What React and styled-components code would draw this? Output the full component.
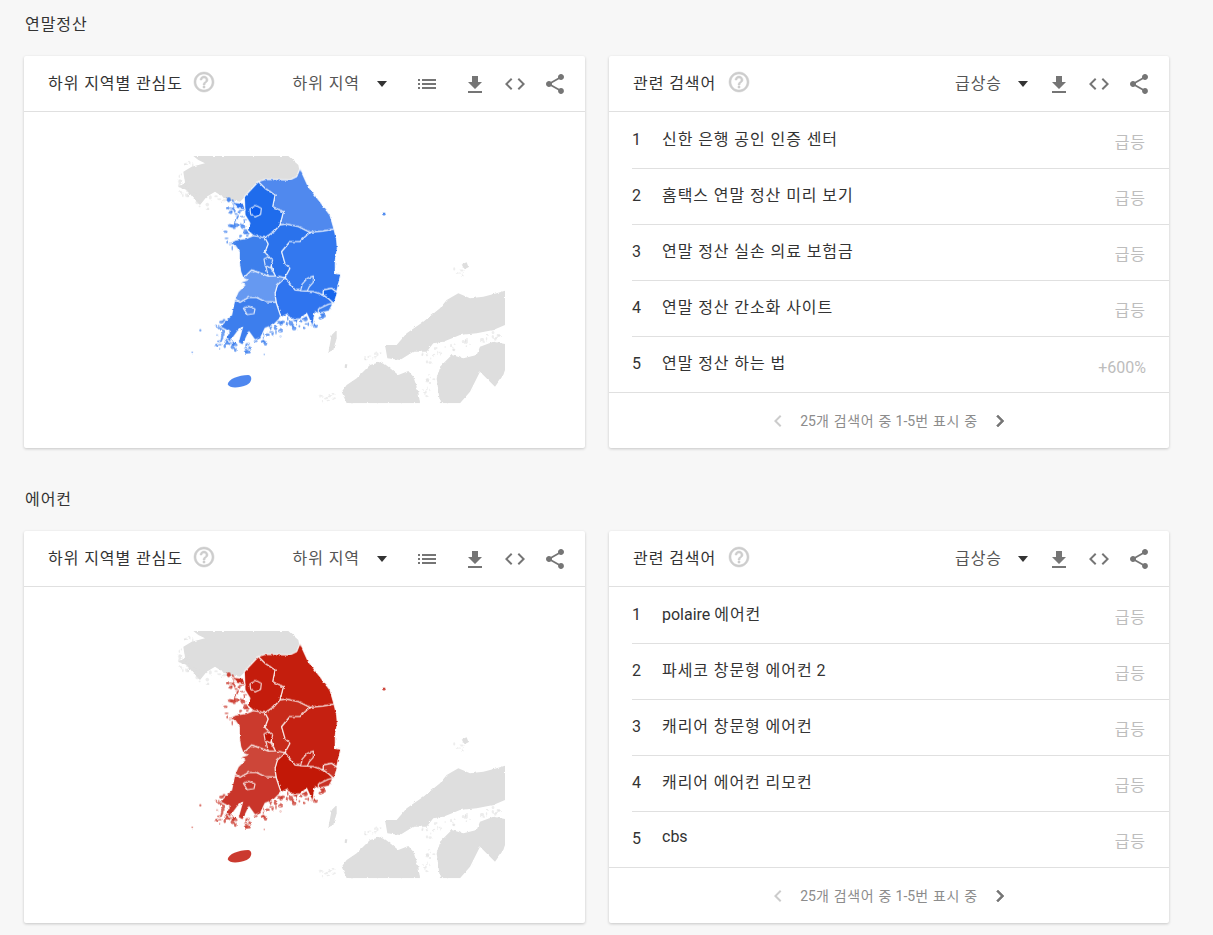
import React from 'react';
import styled, { createGlobalStyle } from 'styled-components';

const GlobalStyle = createGlobalStyle`
  html, body { margin: 0; padding: 0; background: #f7f7f7; }
  body { font-family: Roboto, "Noto Sans CJK KR", sans-serif; color: #333; }
`;

const ICONS = {
  help: 'M11 18h2v-2h-2v2zm1-16C6.48 2 2 6.48 2 12s4.48 10 10 10 10-4.48 10-10S17.52 2 12 2zm0 18c-4.41 0-8-3.59-8-8s3.59-8 8-8 8 3.59 8 8-3.59 8-8 8zm0-14c-2.21 0-4 1.79-4 4h2c0-1.1.9-2 2-2s2 .9 2 2c0 2-3 1.75-3 5h2c0-2.25 3-2.5 3-5 0-2.21-1.79-4-4-4z',
  list: 'M3 13h2v-2H3v2zm0 4h2v-2H3v2zm0-8h2V7H3v2zm4 4h14v-2H7v2zm0 4h14v-2H7v2zM7 7v2h14V7H7z',
  download: 'M19 9h-4V3H9v6H5l7 7 7-7zM5 18v2h14v-2H5z',
  code: 'M9.4 16.6L4.8 12l4.6-4.6L8 6l-6 6 6 6 1.4-1.4zm5.2 0l4.6-4.6-4.6-4.6L16 6l6 6-6 6-1.4-1.4z',
  share: 'M18 16.08c-.76 0-1.44.3-1.96.77L8.91 12.7c.05-.23.09-.46.09-.7s-.04-.47-.09-.7l7.05-4.11c.54.5 1.25.81 2.04.81 1.66 0 3-1.34 3-3s-1.34-3-3-3-3 1.34-3 3c0 .24.04.47.09.7L8.04 9.81C7.5 9.31 6.79 9 6 9c-1.66 0-3 1.34-3 3s1.34 3 3 3c.79 0 1.5-.31 2.04-.81l7.12 4.16c-.05.21-.08.43-.08.65 0 1.61 1.31 2.92 2.92 2.92 1.61 0 2.92-1.31 2.92-2.92s-1.31-2.92-2.92-2.92z',
  prev: 'M15.41 7.41L14 6l-6 6 6 6 1.41-1.41L10.83 12z',
  next: 'M10 6L8.59 7.41 13.17 12l-4.58 4.59L10 18l6-6z',
};

const Icon = ({ name, className }) => (
  <svg className={className} viewBox="0 0 24 24" width="24" height="24" fill="currentColor">
    <path d={ICONS[name]} />
  </svg>
);

const ToolIcon = styled(Icon)`
  flex: none;
  color: #757575;
  margin-left: ${(p) => p.$gap}px;
  transform: translateY(${(p) => p.$down || 0}px);
`;

const HelpIcon = styled(Icon)`
  flex: none;
  color: #cdcdcd;
  stroke: currentColor;
  stroke-width: 0.5;
  margin-left: ${(p) => p.$gap}px;
  transform: translateY(-2px);
`;

const PagerIcon = styled(Icon)`
  flex: none;
  color: ${(p) => (p.$off ? '#cccccc' : '#757575')};
  stroke: currentColor;
  stroke-width: ${(p) => (p.$off ? 0 : 0.6)};
`;

const HangulRun = styled.span`
  letter-spacing: ${(p) => (p.$tight ? 0.7 : 0.92)}px;
`;

// the hangul in the reference sets wider than Noto, latin stays as it is
const Ko = ({ children, tight }) =>
  children.split(/([\uAC00-\uD7A3]+(?:\s+[\uAC00-\uD7A3]+)*)/).map((part, i) =>
    i % 2 ? <HangulRun key={i} $tight={tight}>{part}</HangulRun> : part
  );

const Page = styled.div`
  width: 1213px;
  height: 935px;
  overflow: hidden;
  box-sizing: border-box;
  padding-left: 24px;
`;

const Section = styled.section`
  height: 475px;
`;

const SectionTitle = styled.h2`
  margin: 0;
  height: 56px;
  box-sizing: border-box;
  padding: 15px 0 0 1px;
  font-size: 16px;
  line-height: 20px;
  font-weight: 400;
  color: #333;
`;

const Columns = styled.div`
  display: flex;
  gap: 24px;
`;

const Card = styled.div`
  width: ${(p) => p.$width}px;
  height: 392px;
  background: #fff;
  border-radius: 2px;
  box-shadow: 0 1px 3px rgba(0, 0, 0, 0.2);
  display: flex;
  flex-direction: column;
`;

const CardHeader = styled.header`
  flex: none;
  height: 56px;
  box-sizing: border-box;
  border-bottom: 1px solid #e0e0e0;
  padding: 1px 18px 0 24px;
  display: flex;
  align-items: center;
`;

const CardTitle = styled.h3`
  margin: 0;
  font-size: 16px;
  font-weight: 400;
  color: #333;
  transform: translateY(-2px);
`;

const Spacer = styled.div`
  flex: 1;
`;

const SelectLabel = styled.span`
  font-size: 16px;
  color: #555;
  transform: translateY(-2px);
`;

const Caret = styled.span`
  width: 0;
  height: 0;
  margin-left: ${(p) => p.$gap}px;
  border-left: 5px solid transparent;
  border-right: 5px solid transparent;
  border-top: 6px solid #333;
`;

const MapBox = styled.div`
  flex: 1;
  overflow: hidden;
`;

const RowList = styled.ol`
  margin: 0;
  padding: 1px 0 0;
  list-style: none;
`;

const Row = styled.li`
  height: 56px;
  box-sizing: border-box;
  margin-left: 23px;
  padding-right: 23px;
  border-bottom: 1px solid #e0e0e0;
  display: flex;
  align-items: center;
  font-size: 16px;
  color: #333;

  &:last-child {
    margin-left: 0;
    padding-left: 23px;
  }
`;

const RowIndex = styled.span`
  width: 30px;
  flex: none;
  transform: translateY(-1px);
`;

const RowText = styled.span`
  flex: 1;
  transform: translateY(-3px);
`;

const RowValue = styled.span`
  color: #bdbdbd;
  font-size: 16px;
  transform: translateY(${(p) => p.$down}px);
`;

const Pager = styled.footer`
  flex: 1;
  display: flex;
  align-items: center;
  justify-content: center;
  gap: 10px;
  font-size: 14px;
  color: #8c8c8c;
`;

const PagerText = styled.span`
  transform: translateY(-1px);
`;

// land outlines traced in a 3x grid, the svg viewBox below maps them onto the card
const GRAY_LAND = [
  'M130 33L415 33L445 60L448 75L440 95L420 105L345 105L325 110L300 135L285 155L270 170L235 165L210 150L195 140L170 155L150 180L135 165L110 135L85 125L105 115L100 80L125 65L165 55L145 45Z',
  'M1065 437L1040 445L1000 455L960 460L925 445L890 465L870 490L820 530L770 565L740 600L705 600L712 640L750 645L790 620L830 620L850 595L880 590L930 570L980 565L1030 555L1065 540Z',
  'M1065 597L1030 590L990 605L980 630L940 640L905 630L870 665L860 700L870 775L930 775L960 740L990 680L1035 725L1060 690L1065 675Z',
  'M695 650L660 660L620 700L590 720L575 740L590 775L810 775L805 740L790 695L775 678L745 690L715 665Z',
  'M560 555L545 570L535 622L550 615L560 580Z',
  'M935 358L950 352L955 365L942 372Z',
  'M585 658L592 658L590 670L584 668Z',
];

const REGIONS = [
  { key: 'gangwon', d: 'M325 110L345 103L420 105L440 95L450 70L475 125L510 170L540 210L552 252L520 258L480 262L445 245L408 237L390 240L400 200L368 185L375 150L345 130Z' },
  { key: 'gyeonggi', d: 'M325 110L345 130L375 150L368 185L400 200L390 240L372 260L345 278L310 272L292 255L300 235L285 210L283 155Z' },
  { key: 'incheon', d: 'M245 172L280 175L285 195L262 190Z' },
  { key: 'chungnam', d: 'M258 285L290 280L310 272L345 278L355 297L345 322L358 336L365 365L375 392L355 393L340 388L305 375L280 400L272 380L268 350L268 320L255 300L235 297Z' },
  { key: 'chungbuk', d: 'M345 278L372 260L390 240L408 237L445 245L480 262L460 280L450 290L420 290L395 320L405 355L420 370L405 398L375 392L365 365L358 336L345 322L355 297Z' },
  { key: 'gyeongbuk', d: 'M480 262L520 258L552 252L560 285L562 310L556 345L556 385L572 388L565 420L560 440L545 430L520 435L520 450L490 440L435 435L405 398L420 370L405 355L395 320L420 290L450 290L460 280Z' },
  { key: 'gyeongnam', d: 'M405 398L435 435L490 440L520 450L535 460L550 475L535 498L505 505L495 500L488 545L470 505L450 522L420 522L410 508L393 517L378 470L375 445L382 420Z' },
  { key: 'jeonbuk', d: 'M280 400L305 375L340 388L355 393L375 392L405 398L382 420L375 445L378 472L345 470L320 458L295 458L270 472L255 462L265 440L285 420L272 412L292 405Z' },
  { key: 'jeonnam', d: 'M255 462L270 472L295 458L320 458L345 470L378 472L393 517L370 540L345 550L332 578L315 585L297 560L278 600L265 592L278 545L262 560L240 590L228 580L238 560L210 545L245 510L250 485Z' },
  { key: 'ulsan', d: 'M520 435L545 430L562 443L552 475L535 460L520 450Z' },
  { key: 'busan', d: 'M505 492L535 478L550 474L537 498L505 505Z' },
  { key: 'daegu', d: 'M452 437L456 418L472 400L490 393L490 412L478 425L472 438Z' },
  { key: 'gwangju', d: 'M280 490L296 484L315 492L312 506L292 509Z' },
  { key: 'daejeon', d: 'M342 342L355 335L368 345L362 368L346 364Z' },
  { key: 'sejong', d: 'M348 366L362 368L376 392L355 393Z' },
  { key: 'seoul', d: 'M300 192L318 181L334 190L332 208L315 216L302 208Z' },
];

// small seeded scatter for the island fringe along a coast
const scatter = (points, perPoint, spread, maxSize, seed) => {
  let s = seed;
  const rnd = () => {
    s = (s * 16807) % 2147483647;
    return s / 2147483647;
  };
  const out = [];
  points.forEach(([x, y]) => {
    for (let i = 0; i < perPoint; i++) {
      out.push([x + (rnd() - 0.5) * spread, y + (rnd() - 0.5) * spread, 1.5 + rnd() * maxSize, 1.5 + rnd() * maxSize]);
    }
  });
  return out;
};

const ISLETS = [
  ...scatter(
    [[255, 205], [270, 230], [275, 262], [245, 295], [240, 250], [262, 215], [240, 175], [262, 180]],
    6, 34, 6, 11
  ),
  ...scatter(
    [[215, 560], [230, 545], [240, 590], [215, 590], [250, 600], [285, 605], [330, 580], [365, 560], [395, 545], [420, 535], [455, 535], [482, 530], [520, 505]],
    7, 34, 6, 23
  ),
  ...scatter([[155, 553], [125, 625], [212, 610], [300, 612], [340, 630], [392, 575]], 1, 8, 2, 37),
];

const GRAY_ISLETS = [
  ...scatter([[130, 155], [165, 175], [105, 130], [95, 140], [215, 165], [120, 70], [100, 105]], 6, 36, 5, 41),
  ...scatter([[690, 625], [830, 640], [860, 620], [900, 610], [950, 595], [1000, 580], [1040, 570], [840, 700], [830, 740], [540, 750], [520, 765], [655, 640], [925, 380]], 6, 30, 4, 53),
];

const BLUE = {
  gangwon: '#5089ee', gyeonggi: '#1f6cec', incheon: '#3378ef', chungnam: '#3d7fec', chungbuk: '#2a72ec',
  gyeongbuk: '#3378ef', gyeongnam: '#2f74ef', jeonbuk: '#6699f1', jeonnam: '#3d7eed', ulsan: '#1766ec',
  busan: '#3d80ee', daegu: '#3d80ee', gwangju: '#4f88ee', daejeon: '#3d7fec', sejong: '#3d7fec', seoul: '#0a5ced',
  jeju: '#4e87ef', islet: '#3f80ee',
};

const RED = {
  gangwon: '#c41e0d', gyeonggi: '#c41c0c', incheon: '#c82c1d', chungnam: '#cb3a2d', chungbuk: '#c72a1a',
  gyeongbuk: '#c52011', gyeongnam: '#c21807', jeonbuk: '#cd4639', jeonnam: '#c9352a', ulsan: '#c93225',
  busan: '#c93225', daegu: '#c52011', gwangju: '#c9352a', daejeon: '#bf1506', sejong: '#c72a1a', seoul: '#c41c0c',
  jeju: '#cb3a2f', islet: '#c9352a',
};

const RegionMap = ({ colors, id }) => (
  <svg width="561" height="336" viewBox="-378 -99 1683 1008">
    <defs>
      <filter id={`rough-${id}`} x="-5%" y="-5%" width="110%" height="110%" colorInterpolationFilters="sRGB">
        <feTurbulence type="fractalNoise" baseFrequency="0.08" numOctaves="2" seed="4" />
        <feDisplacementMap in="SourceGraphic" scale="8" xChannelSelector="R" yChannelSelector="G" />
        <feGaussianBlur stdDeviation="1.2" />
      </filter>
      <clipPath id={`crop-${id}`}>
        <rect x="0" y="33" width="1065" height="742" />
      </clipPath>
    </defs>
    <g clipPath={`url(#crop-${id})`}>
      <g filter={`url(#rough-${id})`} fill="#dedede">
        {GRAY_LAND.map((d) => (
          <path key={d} d={d} />
        ))}
        {GRAY_ISLETS.map(([cx, cy, rx, ry], i) => (
          <ellipse key={i} cx={cx} cy={cy} rx={rx} ry={ry} opacity="0.55" />
        ))}
      </g>
    </g>
    <g filter={`url(#rough-${id})`}>
      {ISLETS.map(([cx, cy, rx, ry], i) => (
        <ellipse key={i} cx={cx} cy={cy} rx={rx} ry={ry} fill={colors.islet} opacity="0.75" />
      ))}
      {REGIONS.map((r) => (
        <path key={r.key} d={r.d} fill={colors[r.key]} stroke="#fff" strokeOpacity="0.8" strokeWidth="3.6" strokeLinejoin="round" />
      ))}
      <ellipse cx="702" cy="207" rx="5" ry="4" fill={colors.islet} />
    </g>
    <path
      d="M233 718C235 702 265 691 295 690C308 692 307 712 290 720C270 728 240 732 233 718Z"
      fill={colors.jeju}
    />
  </svg>
);

const Tools = ({ withList, gapFirst }) => (
  <>
    {withList && <ToolIcon name="list" $gap={gapFirst} />}
    <ToolIcon name="download" $gap={withList ? 24 : gapFirst} $down={1} />
    <ToolIcon name="code" $gap={16} />
    <ToolIcon name="share" $gap={16} />
  </>
);

const SECTIONS = [
  {
    id: 'a',
    title: '연말정산',
    colors: BLUE,
    rows: [
      ['신한 은행 공인 인증 센터', '급등'],
      ['홈택스 연말 정산 미리 보기', '급등'],
      ['연말 정산 실손 의료 보험금', '급등'],
      ['연말 정산 간소화 사이트', '급등'],
      ['연말 정산 하는 법', '+600%'],
    ],
  },
  {
    id: 'b',
    title: '에어컨',
    colors: RED,
    rows: [
      ['polaire 에어컨', '급등'],
      ['파세코 창문형 에어컨 2', '급등'],
      ['캐리어 창문형 에어컨', '급등'],
      ['캐리어 에어컨 리모컨', '급등'],
      ['cbs', '급등'],
    ],
  },
];

export default function App() {
  return (
    <Page>
      <GlobalStyle />
      {SECTIONS.map((s) => (
        <Section key={s.id}>
          <SectionTitle><Ko>{s.title}</Ko></SectionTitle>
          <Columns>
            <Card $width={561}>
              <CardHeader>
                <CardTitle><Ko>하위 지역별 관심도</Ko></CardTitle>
                <HelpIcon name="help" $gap={9} />
                <Spacer />
                <SelectLabel><Ko>하위 지역</Ko></SelectLabel>
                <Caret $gap={17} />
                <Tools withList gapFirst={28} />
              </CardHeader>
              <MapBox>
                <RegionMap colors={s.colors} id={s.id} />
              </MapBox>
            </Card>
            <Card $width={560}>
              <CardHeader>
                <CardTitle><Ko>관련 검색어</Ko></CardTitle>
                <HelpIcon name="help" $gap={11} />
                <Spacer />
                <SelectLabel><Ko>급상승</Ko></SelectLabel>
                <Caret $gap={16} />
                <Tools gapFirst={19} />
              </CardHeader>
              <RowList>
                {s.rows.map(([text, value], i) => (
                  <Row key={text}>
                    <RowIndex>{i + 1}</RowIndex>
                    <RowText><Ko>{text}</Ko></RowText>
                    <RowValue $down={value === '급등' ? 0 : 3}><Ko>{value}</Ko></RowValue>
                  </Row>
                ))}
              </RowList>
              <Pager>
                <PagerIcon name="prev" $off />
                <PagerText><Ko tight>25개 검색어 중 1-5번 표시 중</Ko></PagerText>
                <PagerIcon name="next" />
              </Pager>
            </Card>
          </Columns>
        </Section>
      ))}
    </Page>
  );
}
